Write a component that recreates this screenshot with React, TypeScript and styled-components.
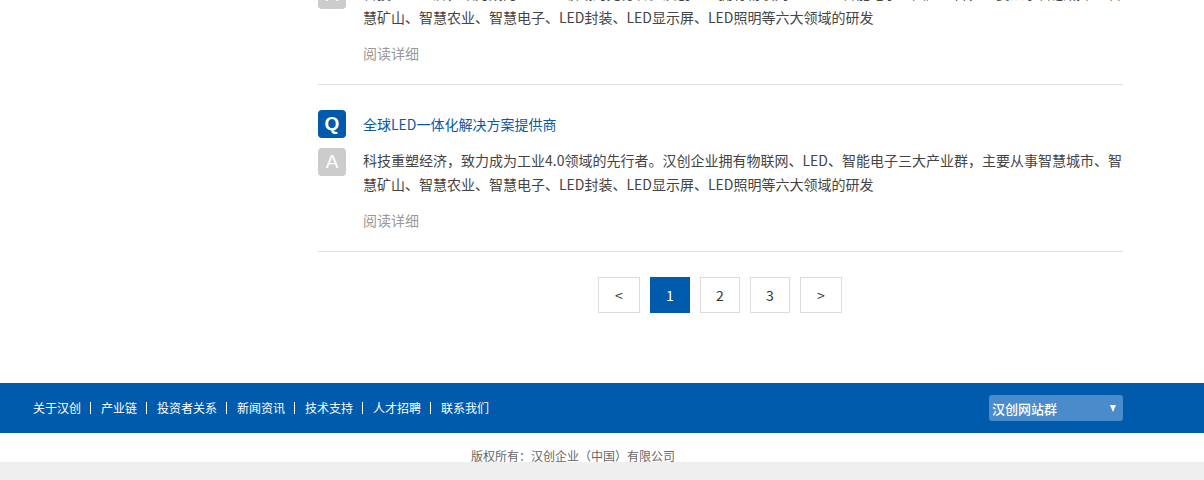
import styled, { createGlobalStyle } from 'styled-components'

const GlobalStyle = createGlobalStyle`
  body {
    margin: 0;
    background: #fff;
    font-family: "Noto Sans CJK SC", "Noto Sans", sans-serif;
    color: #333;
    overflow-x: hidden;
  }
`

const faqs = [
  {
    q: '全球LED一体化解决方案提供商',
    a: '科技重塑经济，致力成为工业4.0领域的先行者。汉创企业拥有物联网、LED、智能电子三大产业群，主要从事智慧城市、智慧矿山、智慧农业、智慧电子、LED封装、LED显示屏、LED照明等六大领域的研发',
  },
  {
    q: '全球LED一体化解决方案提供商',
    a: '科技重塑经济，致力成为工业4.0领域的先行者。汉创企业拥有物联网、LED、智能电子三大产业群，主要从事智慧城市、智慧矿山、智慧农业、智慧电子、LED封装、LED显示屏、LED照明等六大领域的研发',
  },
]

const footerLinks = ['关于汉创', '产业链', '投资者关系', '新闻资讯', '技术支持', '人才招聘', '联系我们']

const pages = ['<', '1', '2', '3', '>']

const App = () => {
  return (
    <>
      <GlobalStyle />
      <Main>
        <Sidebar />
        <Content>
          <List>
            {faqs.map((item, index) => (
              <Item key={index}>
                <Row>
                  <Badge $tone="q">Q</Badge>
                  <Title>{item.q}</Title>
                </Row>
                <Row $top>
                  <Badge $tone="a">A</Badge>
                  <Answer>{item.a}</Answer>
                </Row>
                <More>阅读详细</More>
              </Item>
            ))}
          </List>
          <Pager>
            {pages.map((p) => (
              <PageButton key={p} $active={p === '1'} $wide={p === '<' || p === '>'}>
                {p}
              </PageButton>
            ))}
          </Pager>
        </Content>
      </Main>
      <FooterBar>
        <FooterInner>
          <Links>
            {footerLinks.map((link) => (
              <LinkItem key={link}>{link}</LinkItem>
            ))}
          </Links>
          <SiteSelect>
            <span>汉创网站群</span>
            <Arrow />
          </SiteSelect>
        </FooterInner>
      </FooterBar>
      <Copyright>版权所有：汉创企业（中国）有限公司</Copyright>
      <Bottom />
    </>
  )
}

export default App

const Main = styled.div`
  width: 1090px;
  margin-left: 33px;
  display: flex;
`

const Sidebar = styled.aside`
  width: 285px;
  flex-shrink: 0;
`

const Content = styled.section`
  width: 805px;
  /* page is scrolled: first item is partly above the viewport */
  margin-top: -82px;
`

const List = styled.ul`
  list-style: none;
  margin: 0;
  padding: 0;
`

const Item = styled.li`
  padding: 25px 0 19px;
  border-bottom: 1px solid #e2e2e2;
`

const Row = styled.div<{ $top?: boolean }>`
  display: flex;
  align-items: ${(p) => (p.$top ? 'flex-start' : 'center')};
  gap: 17px;
  margin-top: ${(p) => (p.$top ? '10px' : '0')};
`

const Badge = styled.span<{ $tone: 'q' | 'a' }>`
  width: 28px;
  height: 28px;
  flex-shrink: 0;
  border-radius: 4px;
  background: ${(p) => (p.$tone === 'q' ? '#005bac' : '#cccccc')};
  color: #fff;
  font-family: "Liberation Sans", Arial, sans-serif;
  font-weight: ${(p) => (p.$tone === 'q' ? 'bold' : 'normal')};
  font-size: 19px;
  display: flex;
  align-items: center;
  justify-content: center;
`

const Title = styled.span`
  font-size: 14px;
  color: #0a5aa5;
  line-height: 28px;
`

const Answer = styled.p`
  margin: 0;
  width: 760px;
  font-size: 14px;
  line-height: 24px;
  color: #444;
`

const More = styled.div`
  margin-top: 12px;
  padding-left: 45px;
  font-size: 14px;
  line-height: 24px;
  color: #999;
`

const Pager = styled.nav`
  display: flex;
  justify-content: center;
  gap: 10px;
  margin-top: 25px;
  padding-right: 1px;
`

const PageButton = styled.span<{ $active: boolean; $wide: boolean }>`
  box-sizing: border-box;
  width: ${(p) => (p.$wide ? '42px' : '40px')};
  height: 36px;
  display: flex;
  align-items: center;
  justify-content: center;
  font-size: 14px;
  border: 1px solid ${(p) => (p.$active ? '#005bac' : '#dcdcdc')};
  background: ${(p) => (p.$active ? '#005bac' : '#fff')};
  color: ${(p) => (p.$active ? '#fff' : '#333')};
`

const FooterBar = styled.footer`
  margin-top: 70px;
  height: 50px;
  background: #005bac;
`

const FooterInner = styled.div`
  width: 1090px;
  margin-left: 33px;
  height: 100%;
  display: flex;
  align-items: center;
  justify-content: space-between;
`

const Links = styled.ul`
  display: flex;
  list-style: none;
  margin: 0;
  padding: 0;
`

const LinkItem = styled.li`
  font-size: 12px;
  line-height: 12px;
  color: #fff;
  padding: 0 9px 0 10px;
  border-left: 1px solid #fff;

  &:first-child {
    padding-left: 0;
    border-left: none;
  }
`

const SiteSelect = styled.div`
  box-sizing: border-box;
  width: 134px;
  height: 26px;
  border-radius: 3px;
  background: #4a8bcb;
  color: #fff;
  font-size: 13px;
  font-weight: 500;
  display: flex;
  align-items: center;
  justify-content: space-between;
  padding: 0 7px 0 3px;
`

const Arrow = styled.span`
  width: 0;
  height: 0;
  border-left: 3.5px solid transparent;
  border-right: 3.5px solid transparent;
  border-top: 7px solid #fff;
`

const Copyright = styled.div`
  width: 1090px;
  margin-left: 33px;
  box-sizing: border-box;
  height: 29px;
  padding: 16px 10px 0 0;
  text-align: center;
  font-size: 12px;
  line-height: 14px;
  color: #666;
`

const Bottom = styled.div`
  height: 60px;
  background: #efefef;
`
